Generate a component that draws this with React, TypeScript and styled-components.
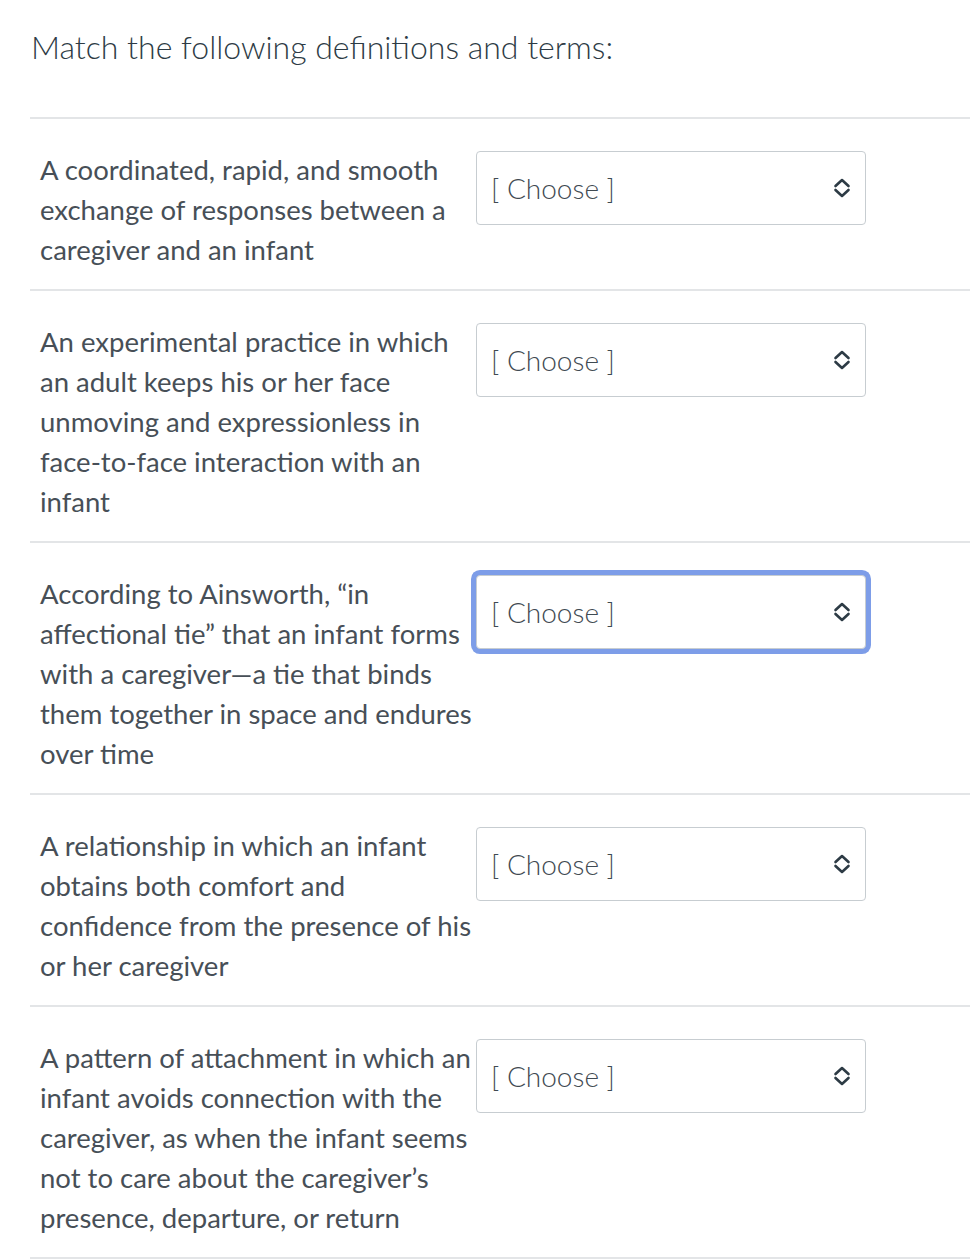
import styled, { createGlobalStyle } from "styled-components";

const GlobalStyle = createGlobalStyle`
  html, body {
    margin: 0;
    padding: 0;
    background: #ffffff;
  }
  body {
    font-family: Lato, "Liberation Sans", sans-serif;
    color: #2d3b45;
  }
`;

const Page = styled.div`
  padding: 0 0 0 30px;
`;

const Title = styled.h1`
  margin: 0;
  padding: 26px 0 0 1px;
  height: 119px;
  box-sizing: border-box;
  font-size: 32px;
  line-height: 42px;
  font-weight: 300;
  color: #2d3b45;
  border-bottom: 2px solid #e3e5e7;
`;

const Row = styled.div`
  display: flex;
  align-items: flex-start;
  padding: 31px 0 19px 10px;
  border-bottom: 2px solid #e3e5e7;
`;

const Definition = styled.div`
  width: 436px;
  flex: none;
  font-size: 27.5px;
  line-height: 40px;
  color: #474f57;
`;

const SelectBox = styled.div<{ $focused?: boolean }>`
  width: 390px;
  height: 74px;
  margin-top: 1px;
  box-sizing: border-box;
  display: flex;
  align-items: center;
  justify-content: space-between;
  padding: 0 14px 0 14px;
  border: 1px solid #c7cdd1;
  border-radius: 4px;
  background: #fff;
  box-shadow: ${({ $focused }) =>
    $focused ? "0 0 0 5px #7d9de8" : "none"};
`;

const Placeholder = styled.span`
  font-size: 28px;
  font-weight: 300;
  color: #3f4a52;
  line-height: 1;
  margin-top: 0;
`;

const Chevrons = () => (
  <svg width="18" height="22" viewBox="0 0 18 22" fill="none">
    <path
      d="M2.5 9 L9 3 L15.5 9"
      stroke="#2d3b45"
      strokeWidth="2.6"
      strokeLinecap="round"
      strokeLinejoin="round"
    />
    <path
      d="M2.5 13 L9 19 L15.5 13"
      stroke="#2d3b45"
      strokeWidth="2.6"
      strokeLinecap="round"
      strokeLinejoin="round"
    />
  </svg>
);

const items = [
  "A coordinated, rapid, and smooth exchange of responses between a caregiver and an infant",
  "An experimental practice in which an adult keeps his or her face unmoving and expressionless in face-to-face interaction with an infant",
  "According to Ainsworth, \u201cin affectional tie\u201d that an infant forms with a caregiver\u2014a tie that binds them together in space and endures over time",
  "A relationship in which an infant obtains both comfort and confidence from the presence of his or her caregiver",
  "A pattern of attachment in which an infant avoids connection with the caregiver, as when the infant seems not to care about the caregiver\u2019s presence, departure, or return",
];

export default function App() {
  return (
    <>
      <GlobalStyle />
      <Page>
        <Title>Match the following definitions and terms:</Title>
        {items.map((text, i) => (
          <Row key={i}>
            <Definition>{text}</Definition>
            <SelectBox $focused={i === 2}>
              <Placeholder>[ Choose ]</Placeholder>
              <Chevrons />
            </SelectBox>
          </Row>
        ))}
      </Page>
    </>
  );
}
